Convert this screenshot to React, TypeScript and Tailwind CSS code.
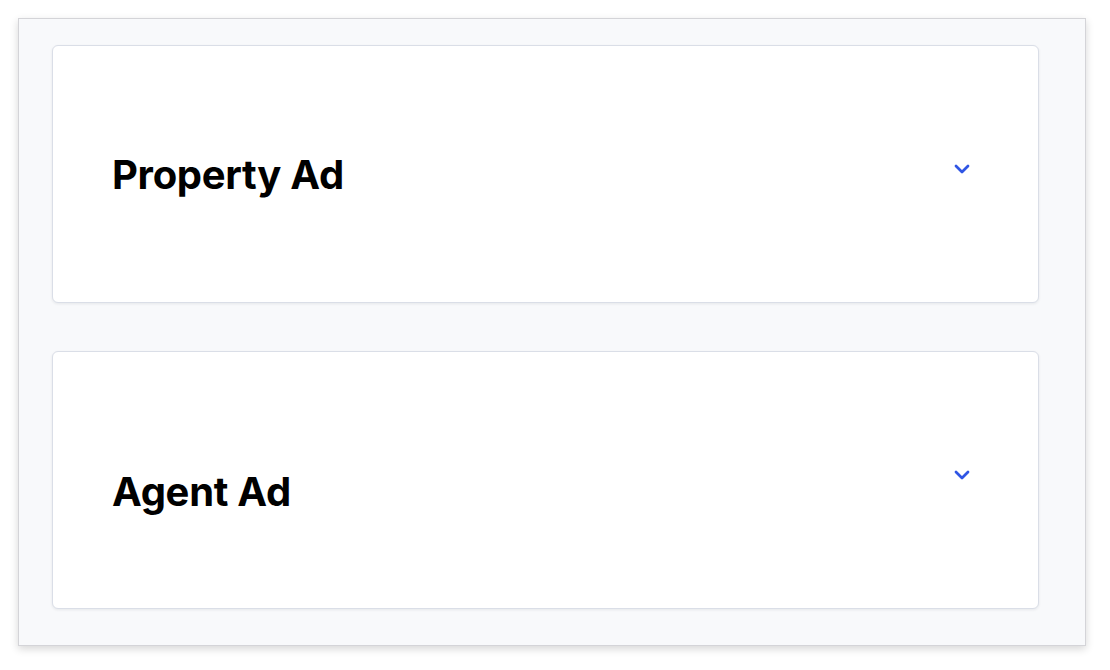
import { ChevronDown } from "lucide-react";

const SECTIONS = [
  { title: "Property Ad", offset: false },
  { title: "Agent Ad", offset: true },
];

function AdSection({ title, offset }: { title: string; offset: boolean }) {
  return (
    <div className="bg-white border border-[#dadee7] rounded-md shadow-[0_1px_3px_rgba(16,24,40,0.08)] h-[258px] pl-[59px] pr-[64px] flex items-center">
      <div className="flex-1 flex items-start justify-between">
        <h2
          className={
            offset
              ? "text-[40px] leading-[48px] font-bold text-black tracking-[-0.3px] mt-[12px] -mb-[12px]"
              : "text-[40px] leading-[48px] font-bold text-black tracking-[-0.3px] mt-[1px] -mb-[1px]"
          }
        >
          {title}
        </h2>
        <ChevronDown size={24} strokeWidth={2.75} className="text-[#2f55e4] mt-[7px] shrink-0" />
      </div>
    </div>
  );
}

export default function App() {
  return (
    <div className="min-h-[670px] bg-white pt-[18px] pl-[18px] font-['Inter','Noto_Sans',sans-serif]">
      <div className="w-[1068px] h-[628px] bg-[#f8f9fb] border border-[#d4d4d8] shadow-[0_3px_8px_rgba(0,0,0,0.16)] pl-[33px] pr-[46px] pt-[26px] pb-[34px] flex flex-col gap-[48px]">
        {SECTIONS.map((s) => (
          <AdSection key={s.title} title={s.title} offset={s.offset} />
        ))}
      </div>
    </div>
  );
}
